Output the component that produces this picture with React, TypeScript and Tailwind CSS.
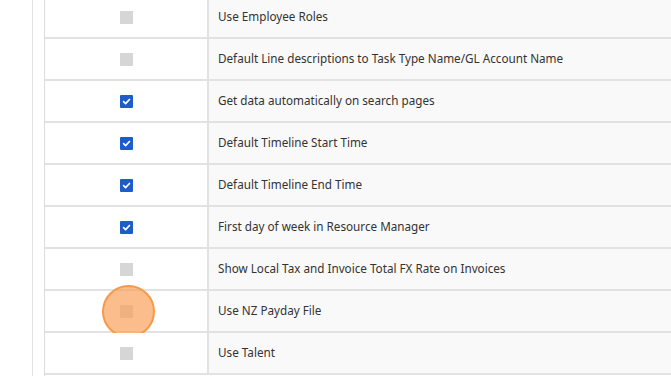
const rows: { label: string; checked: boolean; highlight?: boolean }[] = [
  { label: "Use Employee Roles", checked: false },
  { label: "Default Line descriptions to Task Type Name/GL Account Name", checked: false },
  { label: "Get data automatically on search pages", checked: true },
  { label: "Default Timeline Start Time", checked: true },
  { label: "Default Timeline End Time", checked: true },
  { label: "First day of week in Resource Manager", checked: true },
  { label: "Show Local Tax and Invoice Total FX Rate on Invoices", checked: false },
  { label: "Use NZ Payday File", checked: false, highlight: true },
  { label: "Use Talent", checked: false },
];

function Box({ checked }: { checked: boolean }) {
  if (checked) {
    return (
      <span className="flex h-[13px] w-[13px] items-center justify-center rounded-[1px] bg-[#1e5ccc]">
        <svg width="9" height="9" viewBox="0 0 10 10" fill="none">
          <path d="M1.8 5.2 4 7.3 8.3 2.8" stroke="white" strokeWidth="1.9" strokeLinecap="round" strokeLinejoin="round" />
        </svg>
      </span>
    );
  }
  return <span className="block h-[13px] w-[13px] bg-[#d6d6d6]" />;
}

export default function App() {
  return (
    <div className="flex h-[376px] w-[671px] overflow-hidden bg-white font-['Noto_Sans',sans-serif] text-[11.7px] text-[#333]">
      <div className="w-[32px] shrink-0" />
      <div className="w-[12px] shrink-0 border-l border-[#e3e3e3]" />
      <div className="-mt-[3px] flex-1 border-l border-[#dcdcdc]">
        {rows.map((r) => (
          <div key={r.label} className="grid h-[42px] grid-cols-[164px_1fr] border-b-2 border-[#e2e2e2]">
            <div className="relative flex items-center justify-center border-r-2 border-[#e2e2e2] bg-white">
              <Box checked={r.checked} />
              {r.highlight && (
                <span className="absolute left-[57px] top-[-6px] h-[53px] w-[53px] rounded-full border-2 border-[#f59a4a] bg-[#f8a15a]/70" />
              )}
            </div>
            <div className="flex items-center bg-[#f9f9f9] pl-[9px]">{r.label}</div>
          </div>
        ))}
      </div>
    </div>
  );
}
